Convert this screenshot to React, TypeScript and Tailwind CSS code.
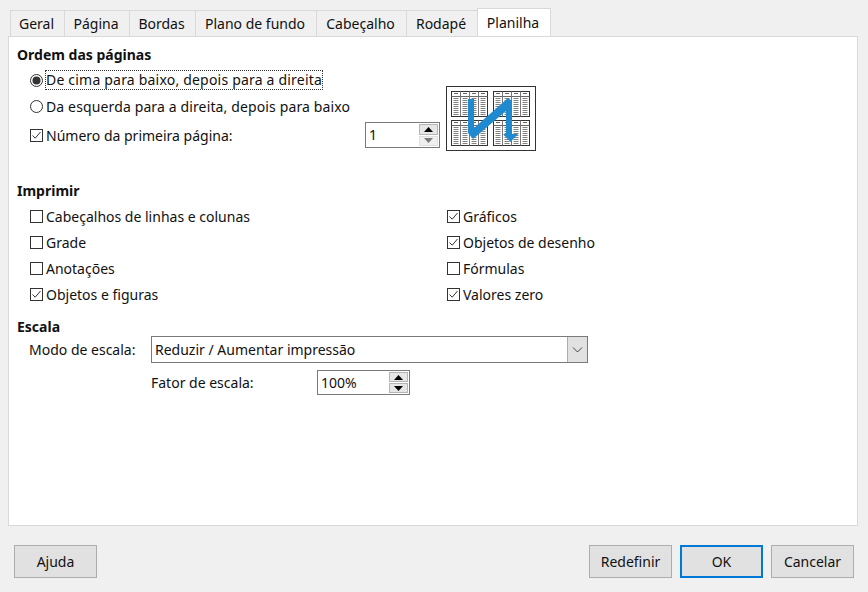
import React from 'react';

const tabs = [
    { label: 'Geral', width: 'w-[55px]' },
    { label: 'Página', width: 'w-[66px]' },
    { label: 'Bordas', width: 'w-[67px]' },
    { label: 'Plano de fundo', width: 'w-[122px]' },
    { label: 'Cabeçalho', width: 'w-[91px]' },
    { label: 'Rodapé', width: 'w-[72px]' },
];

const Check: React.FC<{ label: string; checked?: boolean; className?: string }> = ({ label, checked, className }) => (
    <div className={`flex h-5 items-center ${className ?? ''}`}>
        <svg width="13" height="13" viewBox="0 0 13 13" className="shrink-0">
            <rect x="0.5" y="0.5" width="12" height="12" fill="#fff" stroke="#333" />
            {checked && <path d="M2.5 6.5 L5.2 9.2 L10.5 3" fill="none" stroke="#333" strokeWidth="1" />}
        </svg>
        <span className="ml-[3px] whitespace-nowrap">{label}</span>
    </div>
);

const Radio: React.FC<{ checked?: boolean }> = ({ checked }) => (
    <svg width="13" height="13" viewBox="0 0 13 13" className="shrink-0">
        <circle cx="6.5" cy="6.5" r="6" fill="#fff" stroke="#333" />
        {checked && <circle cx="6.5" cy="6.5" r="4" fill="#333" />}
    </svg>
);

const Spinner: React.FC<{ value: string; width: string; height: string; muted?: boolean }> = ({ value, width, height, muted }) => (
    <div className={`flex items-stretch border border-[#7a7a7a] bg-white ${width} ${height}`}>
        <span className="flex-1 pl-[3px] leading-[23px]">{value}</span>
        <div className="my-px mr-px flex w-[19px] flex-col gap-px">
            <div className="flex flex-1 items-center justify-center border border-[#b5b5b5] bg-[#e6e6e6]">
                <svg width="9" height="5" viewBox="0 0 9 5"><path d="M4.5 0 L9 5 H0 Z" fill="#000" /></svg>
            </div>
            <div className={`flex flex-1 items-center justify-center border ${muted ? 'border-[#e0e0e0] bg-[#efefef]' : 'border-[#b5b5b5] bg-[#e6e6e6]'}`}>
                <svg width="9" height="5" viewBox="0 0 9 5"><path d="M0 0 H9 L4.5 5 Z" fill={muted ? '#7a7a7a' : '#000'} /></svg>
            </div>
        </div>
    </div>
);

// the translate is on a half pixel, so whole local numbers land crisp for horizontal lines
const MiniPage: React.FC<{ x: number; y: number }> = ({ x, y }) => (
    <g transform={`translate(${x} ${y})`}>
        <rect x="0" y="0" width="36" height="25" fill="#fff" stroke="#333" />
        <path d="M0 5 H36" stroke="#666" />
        <path d="M9 0 V25 M18 0 V25 M27 0 V25" stroke="#777" />
        <path d="M2.5 2 H6.5 M11.5 2 H15.5 M20.5 2 H24.5 M29.5 2 H33.5" stroke="#666" />
        {[7, 9, 11, 13, 15, 17, 19, 21, 23].map((ly) => (
            <path key={ly} d={`M2 ${ly} H7 M11 ${ly} H16 M20 ${ly} H25 M29 ${ly} H34`} stroke="#808080" />
        ))}
    </g>
);

const PageOrderIcon: React.FC = () => (
    <svg width="90" height="65" viewBox="0 0 90 65" className="block">
        <rect x="0.5" y="0.5" width="89" height="64" fill="#fff" stroke="#333" />
        <MiniPage x={5.5} y={5.5} />
        <MiniPage x={47.5} y={5.5} />
        <MiniPage x={5.5} y={34.5} />
        <MiniPage x={47.5} y={34.5} />
        <path d="M22 13 H28 V42 L62 12 L66 15 V50 H60 V25 L27 53 L22 47 Z" fill="#1f8ad0" />
        <path d="M57 48 H72 L64.5 56 Z" fill="#1f8ad0" />
    </svg>
);

const Button: React.FC<{ label: string; primary?: boolean }> = ({ label, primary }) => (
    <button className={`h-[33px] w-[83px] bg-[#e1e1e1] text-center ${primary ? 'border-2 border-[#0078d7]' : 'border border-[#adadad]'}`}>
        {label}
    </button>
);

export default function App() {
    return (
        <div className="flex h-[592px] w-[868px] flex-col overflow-hidden bg-[#f0f0f0] font-['Noto_Sans',sans-serif] text-[14px] text-[#111]">
            <div className="flex h-[36px] items-end pl-[10px]">
                {tabs.map((tab) => (
                    <div key={tab.label} className={`-ml-px flex h-[26px] items-center justify-center border border-b-0 border-[#d9d9d9] pr-[2px] first:ml-0 ${tab.width}`}>
                        {tab.label}
                    </div>
                ))}
                <div className="-ml-px flex h-[28px] w-[74px] items-center justify-center border border-b-0 border-[#d9d9d9] bg-white pr-[2px]">Planilha</div>
            </div>

            <div className="mx-2 flex h-[490px] w-[850px] flex-col border border-[#d9d9d9] bg-white pl-2 pt-2">
                <h2 className="h-5 font-bold leading-5">Ordem das páginas</h2>

                <div className="flex">
                    <div className="w-[423px] pl-[13px]">
                        <div className="mt-[5px] flex h-5 items-center">
                            <Radio checked />
                            <span className="ml-[2px] whitespace-nowrap border border-dotted border-[#333] leading-[18px] tracking-[0.2px]">De cima para baixo, depois para a direita</span>
                        </div>
                        <div className="mt-[6px] flex h-5 items-center">
                            <Radio />
                            <span className="ml-[3px] whitespace-nowrap tracking-[0.13px]">Da esquerda para a direita, depois para baixo</span>
                        </div>
                        <div className="mt-[6px] flex h-[26px] items-center justify-between">
                            <Check label="Número da primeira página:" checked />
                            <Spinner value="1" width="w-[75px]" height="h-[26px]" muted />
                        </div>
                    </div>
                    <div className="ml-[6px] mt-[21px]">
                        <PageOrderIcon />
                    </div>
                </div>

                <h2 className="mt-[30px] h-5 font-bold leading-5">Imprimir</h2>
                <div className="mt-[5px] grid grid-cols-[417px_1fr] gap-y-[6px] pl-[13px]">
                    <Check label="Cabeçalhos de linhas e colunas" />
                    <Check label="Gráficos" checked />
                    <Check label="Grade" />
                    <Check label="Objetos de desenho" checked />
                    <Check label="Anotações" />
                    <Check label="Fórmulas" />
                    <Check label="Objetos e figuras" checked />
                    <Check label="Valores zero" checked />
                </div>

                <h2 className="mt-[13px] h-[19px] font-bold leading-5">Escala</h2>
                <div className="flex h-[27px] items-center pl-[12px]">
                    <span className="w-[122px] whitespace-nowrap">Modo de escala:</span>
                    <div className="flex h-[27px] w-[437px] items-stretch border border-[#7a7a7a] bg-white">
                        <span className="flex-1 pl-[3px] leading-[25px]">Reduzir / Aumentar impressão</span>
                        <div className="flex w-[20px] items-center justify-center border-l border-[#adadad] bg-[#e1e1e1]">
                            <svg width="11" height="6" viewBox="0 0 11 6"><path d="M1 0.5 L5.5 5 L10 0.5" fill="none" stroke="#444" /></svg>
                        </div>
                    </div>
                </div>
                <div className="mt-[7px] flex h-[25px] items-center pl-[134px]">
                    <span className="w-[166px] whitespace-nowrap">Fator de escala:</span>
                    <Spinner value="100%" width="w-[93px]" height="h-[25px]" />
                </div>
            </div>

            <div className="mt-[19px] flex items-center px-[14px]">
                <Button label="Ajuda" />
                <div className="ml-auto flex gap-2">
                    <Button label="Redefinir" />
                    <Button label="OK" primary />
                    <Button label="Cancelar" />
                </div>
            </div>
        </div>
    );
}
